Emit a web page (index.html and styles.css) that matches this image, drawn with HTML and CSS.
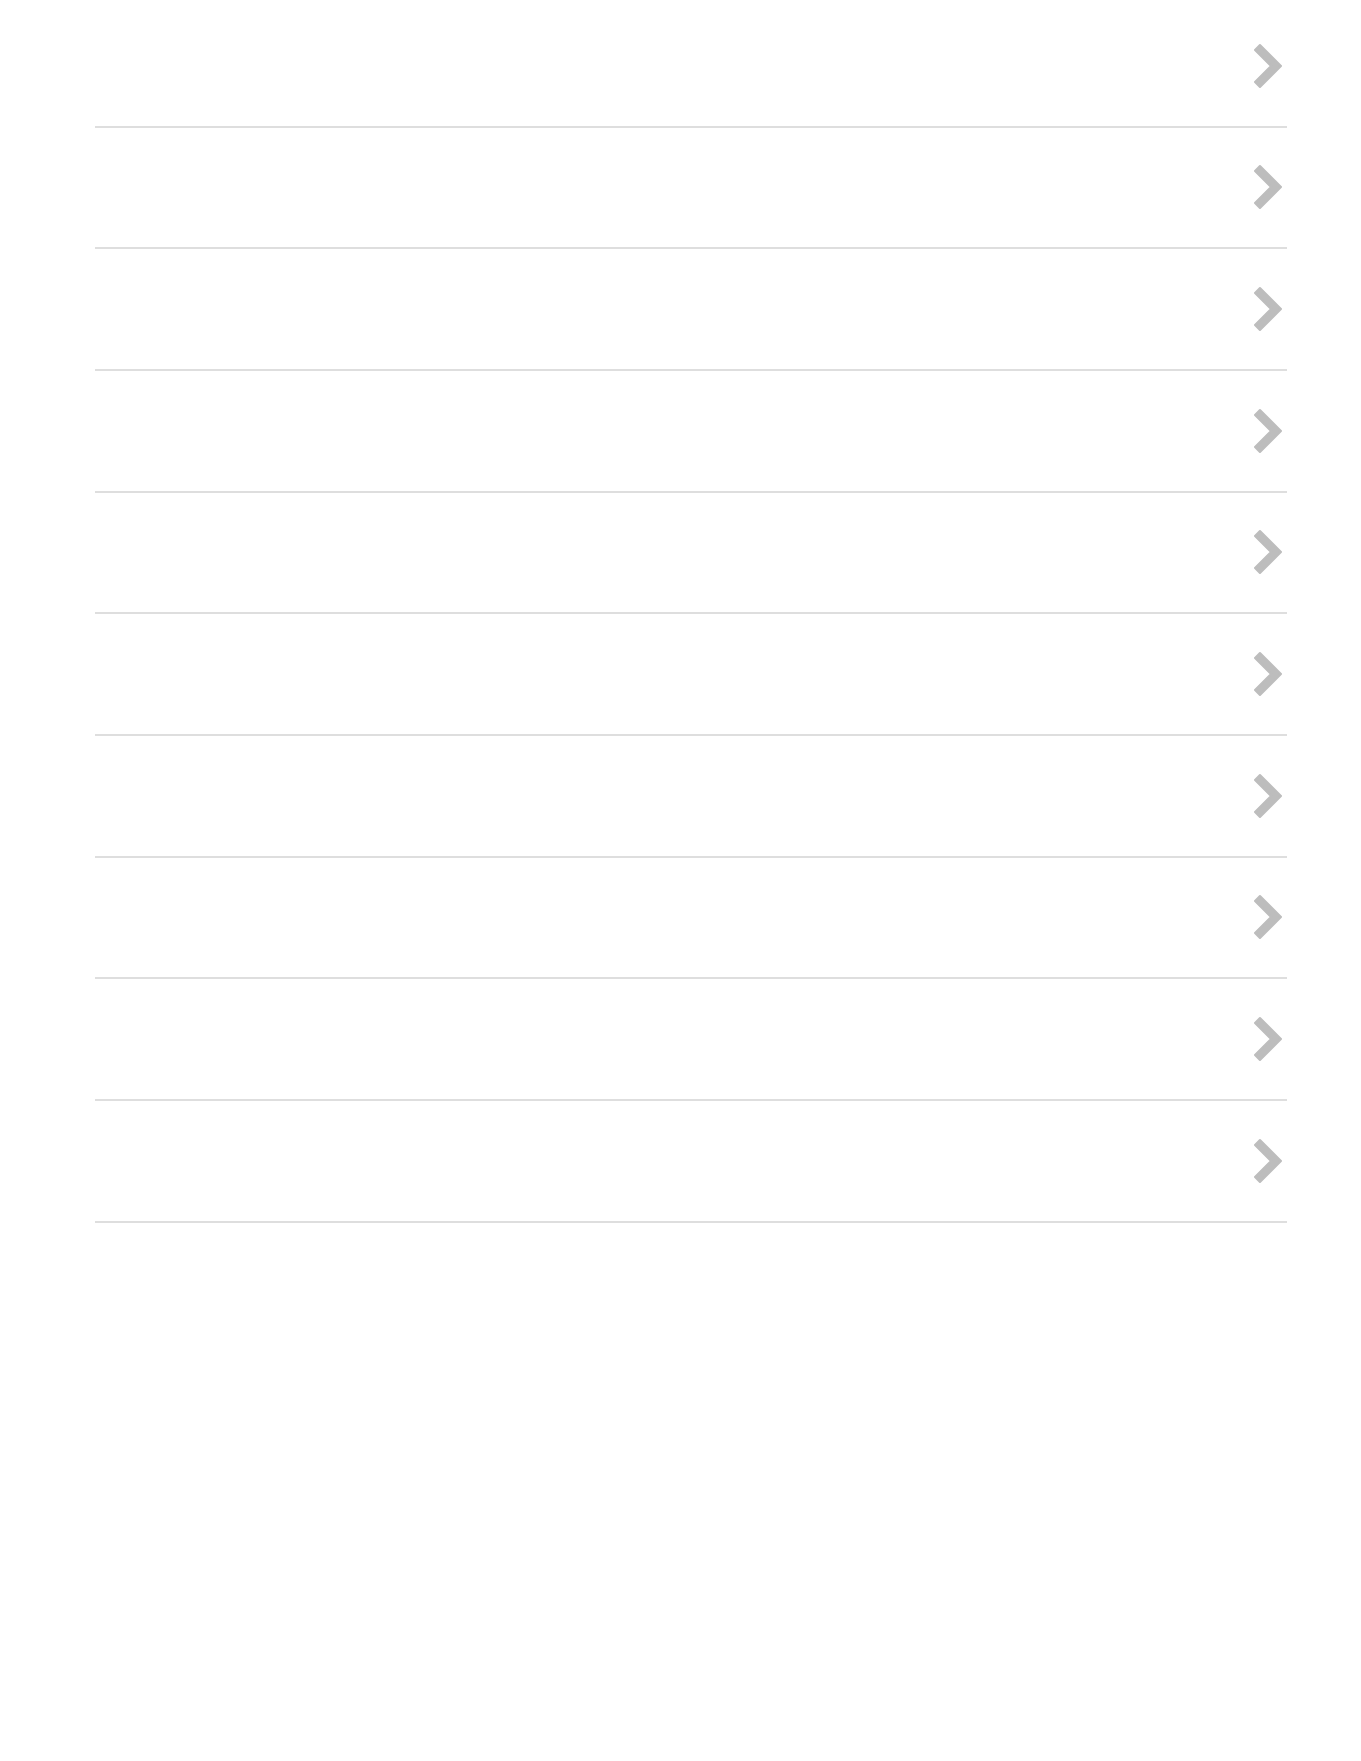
FILE: index.html
```html
<!DOCTYPE html>
<html>
<head>
    <title>List</title>
    <link rel="stylesheet" href="styles.css">
</head>
<body>
    <div class="list">
        <div class="row"><svg class="chevron" viewBox="8.59 6 7.41 12"><path d="M10 6L8.59 7.41 13.17 12l-4.58 4.59L10 18l6-6z"/></svg></div>
        <div class="row"><svg class="chevron" viewBox="8.59 6 7.41 12"><path d="M10 6L8.59 7.41 13.17 12l-4.58 4.59L10 18l6-6z"/></svg></div>
        <div class="row"><svg class="chevron" viewBox="8.59 6 7.41 12"><path d="M10 6L8.59 7.41 13.17 12l-4.58 4.59L10 18l6-6z"/></svg></div>
        <div class="row"><svg class="chevron" viewBox="8.59 6 7.41 12"><path d="M10 6L8.59 7.41 13.17 12l-4.58 4.59L10 18l6-6z"/></svg></div>
        <div class="row"><svg class="chevron" viewBox="8.59 6 7.41 12"><path d="M10 6L8.59 7.41 13.17 12l-4.58 4.59L10 18l6-6z"/></svg></div>
        <div class="row"><svg class="chevron" viewBox="8.59 6 7.41 12"><path d="M10 6L8.59 7.41 13.17 12l-4.58 4.59L10 18l6-6z"/></svg></div>
        <div class="row"><svg class="chevron" viewBox="8.59 6 7.41 12"><path d="M10 6L8.59 7.41 13.17 12l-4.58 4.59L10 18l6-6z"/></svg></div>
        <div class="row"><svg class="chevron" viewBox="8.59 6 7.41 12"><path d="M10 6L8.59 7.41 13.17 12l-4.58 4.59L10 18l6-6z"/></svg></div>
        <div class="row"><svg class="chevron" viewBox="8.59 6 7.41 12"><path d="M10 6L8.59 7.41 13.17 12l-4.58 4.59L10 18l6-6z"/></svg></div>
        <div class="row"><svg class="chevron" viewBox="8.59 6 7.41 12"><path d="M10 6L8.59 7.41 13.17 12l-4.58 4.59L10 18l6-6z"/></svg></div>
    </div>
</body>
</html>
```

FILE: styles.css
```css
body { margin: 0; padding: 0; background: #ffffff; font-family: Roboto, Arial, sans-serif; }
.list { margin: 6px 74px 0 95px; }
.row { display: flex; justify-content: flex-end; align-items: center; height: 121.67px; box-sizing: border-box; border-bottom: 2px solid #dedede; padding-right: 6px; }
.chevron { width: 26px; height: 42px; fill: #bdbdbd; stroke: #bdbdbd; stroke-width: 0.6; stroke-linejoin: round; overflow: visible; filter: blur(0.6px); }
```
